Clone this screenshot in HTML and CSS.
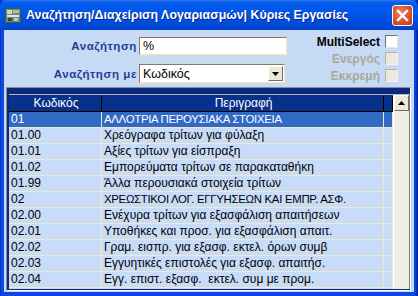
FILE: index.html
```html
<!DOCTYPE html>
<html>
<head>
<meta charset="utf-8">
<link rel="stylesheet" href="styles.css">
</head>
<body>
<div class="window">
  <div class="titlebar">
    <span class="app-icon">
      <svg width="16" height="15" viewBox="0 0 16 15">
        <rect x="0" y="0" width="16" height="15" fill="#3c5a4a"/>
        <rect x="1" y="1" width="14" height="13" fill="#6f8a7a"/>
        <rect x="2" y="2" width="5" height="4" fill="#c8d8cc"/>
        <rect x="8" y="2" width="6" height="3" fill="#a9bdb0"/>
        <rect x="2" y="7" width="12" height="2" fill="#dfe8e0"/>
        <rect x="3" y="10" width="4" height="3" fill="#2e4a3a"/>
        <rect x="9" y="10" width="4" height="3" fill="#b9c9bd"/>
      </svg>
    </span>
    <span class="title">Αναζήτηση/Διαχείριση Λογαριασμών| Κύριες Εργασίες</span>
    <span class="close">
      <svg width="21" height="21" viewBox="0 0 21 21">
        <path d="M6 6 L15 15 M15 6 L6 15" stroke="#fff" stroke-width="2.4" stroke-linecap="square"/>
      </svg>
    </span>
  </div>
  <div class="client">
    <div class="form">
      <div class="fields">
        <div class="field">
          <span class="label">Αναζήτηση</span>
          <span class="input">%</span>
        </div>
        <div class="field">
          <span class="label">Αναζήτηση με</span>
          <span class="select"><span class="select-text">Κωδικός</span><span class="dd"><svg width="7" height="4" viewBox="0 0 7 4"><path d="M0 0 H7 L3.5 4 Z" fill="#000"/></svg></span></span>
        </div>
      </div>
      <div class="checks">
        <div class="check"><span>MultiSelect</span><span class="box"></span></div>
        <div class="check disabled"><span>Ενεργός</span><span class="box"></span></div>
        <div class="check disabled"><span>Εκκρεμή</span><span class="box"></span></div>
      </div>
    </div>
    <div class="gridframe">
      <div class="gridinner">
        <div class="gridbody">
          <div class="row head"><span class="c1">Κωδικός</span><span class="c2">Περιγραφή</span><span class="c3"></span></div>
          <div class="row sel"><span class="c1">01</span><span class="c2 caps">ΑΛΛΟΤΡΙΑ ΠΕΡΟΥΣΙΑΚΑ ΣΤΟΙΧΕΙΑ</span><span class="c3"></span></div>
          <div class="row"><span class="c1">01.00</span><span class="c2">Χρεόγραφα τρίτων για φύλαξη</span><span class="c3"></span></div>
          <div class="row"><span class="c1">01.01</span><span class="c2">Αξίες τρίτων για είσπραξη</span><span class="c3"></span></div>
          <div class="row"><span class="c1">01.02</span><span class="c2">Εμπορεύματα τρίτων σε παρακαταθήκη</span><span class="c3"></span></div>
          <div class="row"><span class="c1">01.99</span><span class="c2">Άλλα περουσιακά στοιχεία τρίτων</span><span class="c3"></span></div>
          <div class="row"><span class="c1">02</span><span class="c2 caps">ΧΡΕΩΣΤΙΚΟΙ ΛΟΓ. ΕΓΓΥΗΣΕΩΝ ΚΑΙ ΕΜΠΡ. ΑΣΦ.</span><span class="c3"></span></div>
          <div class="row"><span class="c1">02.00</span><span class="c2">Ενέχυρα τρίτων για εξασφάλιση απαιτήσεων</span><span class="c3"></span></div>
          <div class="row"><span class="c1">02.01</span><span class="c2">Υποθήκες και προσ. για εξασφάλιση απαιτ.</span><span class="c3"></span></div>
          <div class="row"><span class="c1">02.02</span><span class="c2">Γραμ. εισπρ. για εξασφ. εκτελ. όρων συμβ</span><span class="c3"></span></div>
          <div class="row"><span class="c1">02.03</span><span class="c2">Εγγυητικές επιστολές για εξασφ. απαιτήσ.</span><span class="c3"></span></div>
          <div class="row"><span class="c1">02.04</span><span class="c2">Εγγ. επιστ. εξασφ.&nbsp; εκτελ. συμ με προμ.</span><span class="c3"></span></div>
        </div>
        <div class="scrollbar">
          <div class="up"><svg width="7" height="4" viewBox="0 0 7 4"><path d="M3.5 0 L7 4 H0 Z" fill="#000"/></svg></div>
          <div class="track"></div>
        </div>
      </div>
    </div>
  </div>
</div>
</body>
</html>
```
FILE: styles.css
```css
* { box-sizing: border-box; }
html, body { margin: 0; padding: 0; }
body { width: 418px; height: 296px; overflow: hidden; background: #0a3bd9; }

.window {
  width: 418px;
  height: 296px;
  display: flex;
  flex-direction: column;
  background: linear-gradient(to right, #0019b0 0, #0c4ee6 1px, #0a48e0 3px, #0a48e0 414px, #0041d0 416px, #00138c 418px);
}

.titlebar {
  height: 30px;
  flex: none;
  display: flex;
  align-items: center;
  padding: 0 5px 0 5px;
  background: linear-gradient(#2f7ef6 0, #0a5ee8 2px, #005aee 5px, #0057e9 12px, #0050df 20px, #0049d6 26px, #003fc8 30px);
  border-radius: 7px 7px 0 0;
}
.app-icon { width: 16px; height: 15px; display: flex; margin-top: 1px; }
.title {
  margin-left: 5px;
  color: #fff;
  font-family: "Liberation Sans", Arial, sans-serif;
  font-weight: bold;
  font-size: 12.4px;
  white-space: nowrap;
  flex: 1;
  text-shadow: 1px 1px 0 #0a1e8a;
}
.close {
  width: 21px;
  height: 21px;
  display: flex;
  border: 1px solid #fff;
  border-radius: 3px;
  background: radial-gradient(circle at 40% 35%, #e78a6c 0, #e0582f 45%, #c43a14 100%);
  margin-right: 0;
}
.close svg { margin: -1px; }

.client {
  flex: 1;
  margin: 0 4px 4px 4px;
  background: #c6daf6;
  display: flex;
  flex-direction: column;
}

.form {
  display: flex;
  justify-content: space-between;
  padding-top: 5px;
  height: 57px;
}
.fields { display: flex; flex-direction: column; gap: 9px; padding-top: 2px; }
.field { display: flex; align-items: center; gap: 2px; }
.label {
  width: 133px;
  text-align: right;
  font-family: "Liberation Sans", Arial, sans-serif;
  font-weight: bold;
  font-size: 11.5px;
  letter-spacing: 0.6px;
  color: #1e3f8f;
  white-space: nowrap;
}
.input, .select {
  width: 148px;
  height: 18px;
  background: #fff;
  border: 1px solid;
  border-color: #7a7a7a #e8e6dc #e8e6dc #7a7a7a;
  box-shadow: 0 0 0 1px #dcdad0;
  font-family: "Liberation Sans", Arial, sans-serif;
  font-size: 12.5px;
  color: #000;
  padding-left: 3px;
  line-height: 16px;
  display: flex;
  align-items: center;
}
.select { width: 146px; height: 19px; padding-right: 1px; }
.select-text { flex: 1; }
.dd {
  width: 15px;
  height: 15px;
  background: #ece9d8;
  border: 1px solid;
  border-color: #fff #716f64 #716f64 #fff;
  display: flex;
  align-items: center;
  justify-content: center;
}

.checks { display: flex; flex-direction: column; gap: 4px; padding-right: 16px; }
.check {
  display: flex;
  align-items: center;
  justify-content: flex-end;
  gap: 5px;
  height: 13px;
  font-family: "Liberation Sans", Arial, sans-serif;
  font-weight: bold;
  font-size: 12px;
  color: #000;
}
.check.disabled { color: #aca899; }
.box {
  width: 13px;
  height: 13px;
  background: #fff;
  border: 1px solid;
  border-color: #6f6f6f #e8e8e8 #e8e8e8 #6f6f6f;
}
.check.disabled .box { background: #ebe9e0; border-color: #b5b2a5 #f4f3ee #f4f3ee #b5b2a5; }

.gridframe {
  flex: 1;
  margin: 0 3px 1px 2px;
  border: 1px solid;
  border-color: #8c8c8c #fff #fff #8c8c8c;
  background: #0a2a80;
  padding: 6px 1px 1px 2px;
  display: flex;
}
.gridinner {
  flex: 1;
  display: flex;
  border-top: 1px solid #b8b8b8;
  border-right: 1px solid #7b7b7b;
  background: #c6daf6;
}
.gridbody { flex: 1; display: flex; flex-direction: column; border-top: 1px solid #0a2a80; }
.row {
  display: flex;
  height: 16px;
  font-family: "Liberation Sans", Arial, sans-serif;
  font-size: 12px;
  color: #000;
  background: #c8dcf8;
}
.row span {
  border-right: 1px solid #eee8d2;
  border-bottom: 1px solid #eee8d2;
  padding-left: 2px;
  line-height: 15px;
  white-space: nowrap;
  overflow: hidden;
}
.row span.caps { font-size: 11.4px; letter-spacing: -0.3px; }
.c1 { width: 93px; }
.c2 { width: 282px; }
.c3 { width: 9px; }
.row.head { background: #08318c; color: #fff; }
.row.head span { border-color: #000; text-align: center; }
.row.sel { background: #316ac5; color: #fff; }

.scrollbar {
  width: 16px;
  display: flex;
  flex-direction: column;
  background: #f0eee6;
  border-left: 1px solid #fff;
}
.up {
  height: 16px;
  background: #ece9d8;
  border: 1px solid;
  border-color: #fff #716f64 #716f64 #fff;
  display: flex;
  align-items: center;
  justify-content: center;
}
.track { flex: 1; }
```
